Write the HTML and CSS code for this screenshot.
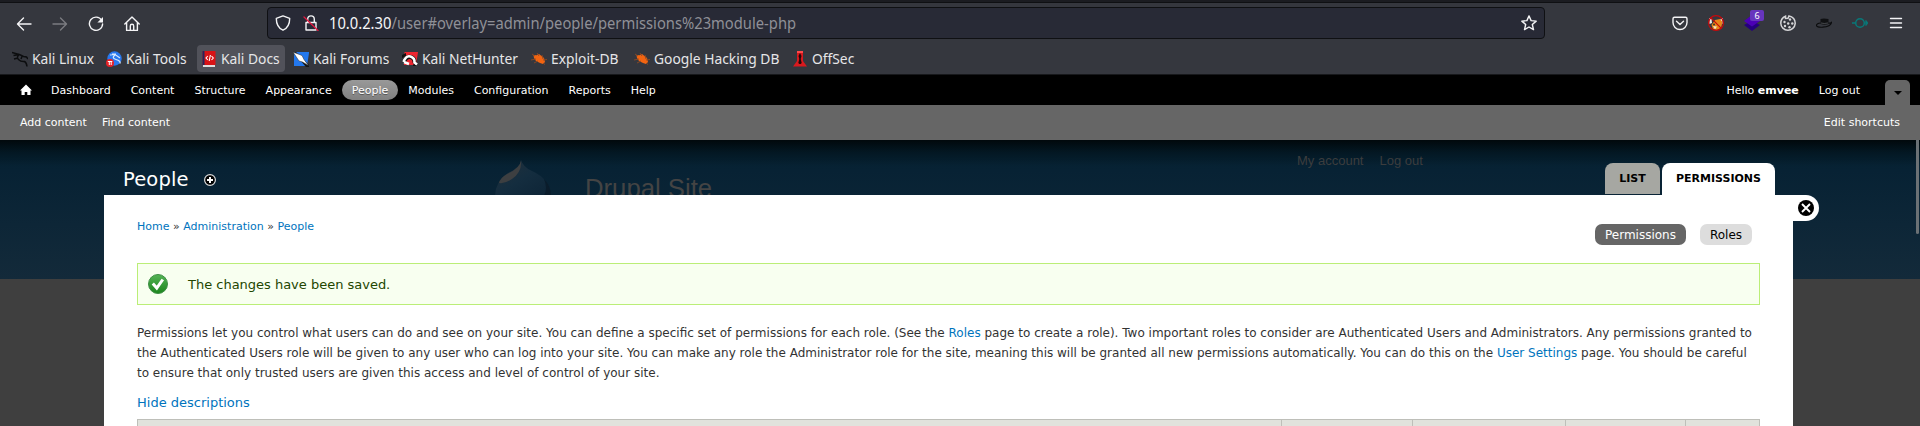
FILE: index.html
```html
<!DOCTYPE html>
<html lang="en">
<head>
<meta charset="utf-8">
<title>People | Drupal Site</title>
<link rel="stylesheet" href="styles.css">
</head>
<body>
<div class="window">
  <div class="titlebar"></div>
  <div class="navbar">
    <div class="nav-buttons">
      <svg class="ico" viewBox="0 0 16 16"><path d="M15 8H1.6M7.500 2L1.500 8l6 6"/></svg>
      <svg class="ico dim" viewBox="0 0 16 16"><path d="M1 8h13.400M8.500 2l6 6-6 6"/></svg>
      <svg class="ico" viewBox="0 0 16 16"><path d="M13.600 4.200A6.600 6.600 0 1 0 14.600 8"/><path class="solid" d="M15 1v5.600H9.400z"/></svg>
      <svg class="ico" viewBox="0 0 16 16"><path d="M.8 8L8 1l7.200 7M2.600 6.800v7.600h10.800V6.800M6.300 14V10a1.700 1.700 0 0 1 3.400 0v4"/></svg>
    </div>
    <div class="urlbar">
      <svg class="ico shield" viewBox="0 0 16 16"><path d="M8 .9l6.700 2.500c0 5-1.500 9.400-6.700 11.800C2.800 12.800 1.300 8.400 1.300 3.400z"/></svg>
      <svg class="ico lock" viewBox="0 0 16 16"><path d="M3 7.500h10v7.500H3zM4.700 7V4.200a3.300 3.300 0 0 1 6.600 0V7"/><path class="slash" d="M1 2l14 13.500"/></svg>
      <div class="url"><span class="host">10.0.2.30</span>/user#overlay=admin/people/permissions%23module-php</div>
      <svg class="ico star" viewBox="0 0 16 16"><path d="M8 .9l2.100 4.700 5.100.5-3.900 3.400 1.200 5.100L8 12l-4.500 2.600 1.200-5.100L.8 6.100l5.100-.5z"/></svg>
    </div>
    <div class="extensions">
      <span class="ext"><svg class="ico" viewBox="0 0 16 16"><path d="M2.500 2.200h11q1.500 0 1.500 1.500v3.800a7 7 0 0 1-14 0V3.700q0-1.500 1.500-1.500zM4.500 6.200L8 9.500l3.500-3.300"/></svg></span>
      <span class="ext"><svg viewBox="0 0 16 16"><path fill="#eee" d="M1 3l2.500 1L4 8l-2.500 1zM15 3l-2.500 1-.5 4 2.500 1z"/><path fill="#e8861a" d="M3.500 10L7 5l5-1 2.500 3-1.500 6-4 2-4-1z"/><path fill="#f4e3c8" d="M5 11l4 .5-2 3z"/><circle cx="6" cy="9.500" r="1" fill="#333"/><path fill="none" stroke="#c8080b" stroke-width="1.200" d="M2.700 2.700l10.600 10.600"/><circle cx="8" cy="8" r="7.400" fill="none" stroke="#c8080b" stroke-width="1.200"/></svg></span>
      <span class="ext"><svg viewBox="0 0 16 16"><path fill="#25007e" d="M0 10l8-4.500 8 4.500-8 6z"/><path fill="#4b00b5" d="M0 6l8-6 8 6-8 5.500z"/></svg><b class="badge">6</b></span>
      <span class="ext"><svg viewBox="0 0 16 16"><path fill="none" stroke="#d5d5d7" stroke-width="1.500" d="M5.500 1.200C2.500 2.500.8 5 .8 8.200A7.200 7.200 0 1 0 9 .9L8 3.200l-2.500.3z"/><g fill="#d5d5d7"><circle cx="4.500" cy="7" r="1.200"/><circle cx="10" cy="4.500" r="1.200"/><circle cx="5" cy="11" r="1.200"/><circle cx="8.200" cy="8.500" r="1.200"/><circle cx="9.500" cy="12.300" r="1.200"/><circle cx="12.300" cy="8.500" r="1.200"/></g></svg></span>
      <span class="ext"><svg viewBox="0 0 16 16"><path fill="#101113" d="M4.500 9V4q3-1 8 0v5q-4 1.500-8 0z"/><path fill="none" stroke="#0b0c0d" stroke-width="1.200" d="M4.500 8Q.5 8.500.5 10.500q0 2 6 1.700 8.500-.7 9-4.700-1 .8-3 .7"/><path fill="none" stroke="#53555b" stroke-width=".8" d="M5 8q3 1 7 0"/></svg></span>
      <span class="ext"><svg viewBox="0 0 16 16"><path fill="none" stroke="#087878" stroke-width="1.500" d="M0 8h4.500M11.500 8h3M8 3.700a4.300 4.300 0 1 1 0 8.600 4.300 4.300 0 0 1 0-8.600M13.500 5.500L15.500 8l-2 2.500"/></svg></span>
      <span class="ext"><svg class="ico menu-lines" viewBox="0 0 16 16"><path d="M2.500 3.500h11M2.500 8h11M2.500 12.500h11"/></svg></span>
    </div>
  </div>
  <div class="bookmarks">
    <div class="bm b1"><svg viewBox="0 0 16 16"><path fill="none" stroke="#0c0d0f" stroke-width="1.500" d="M0 1.500l7 2M1.500 4.500l6-1 4 2 3 .5 1.500 2M7.500 3.500Q4 6 6.500 8.500t6 2q2 1 2.500 5M2 8l4-1M10 5.500L9 8"/></svg><span>Kali Linux</span></div>
    <div class="bm b2"><svg viewBox="0 0 16 16"><circle cx="8.500" cy="7.500" r="7.200" fill="#2878ee"/><path fill="none" stroke="#d7e9ff" stroke-width="1.200" d="M4 4l5-.5 5 3.500M9 4Q5 7 10 8.500t4 4M6 3h4"/><circle cx="4" cy="12" r="4" fill="#e52127"/><path fill="none" stroke="#fff" d="M1.800 10.500h4.500M3.300 10.500V14M5.200 10.500V14"/></svg><span>Kali Tools</span></div>
    <div class="bm b3 hover"><svg viewBox="0 0 16 16"><path fill="#dedede" d="M2 14h12v2H2z"/><path fill="#d81316" d="M1.500 0h13v14h-13z"/><path fill="#23275c" d="M1.500 0h2v14h-2z"/><path fill="none" stroke="#fff" stroke-width="1.100" d="M6.800 5L5 7l1.800 2M10.500 5l1.800 2-1.800 2M9.400 4l-1.200 6"/></svg><span>Kali Docs</span></div>
    <div class="bm b4"><svg viewBox="0 0 16 16"><path fill="#2378ee" d="M1 1h15v1l-2 13H1z"/><path fill="#151719" d="M0 1h3l13 13v2h-3z"/><path fill="#fff" stroke="#27292e" stroke-width=".5" d="M0 1l9 3.500 2 4 4.500 6L9.500 11 6 10z"/></svg><span>Kali Forums</span></div>
    <div class="bm b5"><svg viewBox="0 0 16 16"><path fill="#ed2630" d="M2.500 1H16l-2 13H2z"/><path fill="#111" d="M0 4l4-2v3L0 7zM12 11l3 4h-4z"/><path fill="none" stroke="#111" stroke-width="4" d="M2 11.500Q4 5 8.500 6t4 6"/><path fill="none" stroke="#fff" stroke-width="2.600" d="M1.500 11Q4 4 8.500 5.500t4 6l2.500 2M2 11l5 2"/></svg><span>Kali NetHunter</span></div>
    <div class="bm b6"><svg viewBox="0 0 16 16"><path fill="#f26411" d="M2.500 4l3 .3L8 3l5 4 1 4-2 2-3-1-4-2-2-3z"/><path fill="none" stroke="#8c4a25" stroke-width=".9" d="M1 3l3 2M6 2l2 3M0 9l5-1M3 12l4-2M11 4l1 4M12 9l4-.5M12 12l2 1.500"/></svg><span>Exploit-DB</span></div>
    <div class="bm b7"><svg viewBox="0 0 16 16"><path fill="#f26411" d="M2.500 4l3 .3L8 3l5 4 1 4-2 2-3-1-4-2-2-3z"/><path fill="none" stroke="#8c4a25" stroke-width=".9" d="M1 3l3 2M6 2l2 3M0 9l5-1M3 12l4-2M11 4l1 4M12 9l4-.5M12 12l2 1.500"/></svg><span>Google Hacking DB</span></div>
    <div class="bm b8"><svg viewBox="0 0 16 16"><path fill="#d8191e" d="M5 0h6v10l4 5.500H1L5 10z"/><path fill="#ff4a4a" d="M5 0h6v2H5z"/><path fill="#210809" d="M8 2l1.500 3-.8 3 1 4-1 1H7.300l-1-1 1-4-.8-3z"/></svg><span>OffSec</span></div>
  </div>

  <nav class="toolbar">
    <svg class="home" viewBox="0 0 12 12"><path fill="#fff" d="M6 .5L12 6.500h-1.500V11H7.300V8H4.700v3H1.500V6.500H0z"/></svg>
    <div class="menu">
      <a>Dashboard</a><a>Content</a><a>Structure</a><a>Appearance</a><a class="active">People</a><a>Modules</a><a>Configuration</a><a>Reports</a><a>Help</a>
    </div>
    <div class="user"><a>Hello <strong>emvee</strong></a><a>Log out</a></div>
    <div class="toggle"><i></i></div>
  </nav>
  <div class="shortcuts">
    <div class="links"><a>Add content</a><a>Find content</a></div>
    <a>Edit shortcuts</a>
  </div>

  <main class="stage">
    <div class="site">
      <svg class="drop" viewBox="0 0 58 36">
        <defs><linearGradient id="d" x1="0" y1="0" x2="1" y2="1"><stop offset="0" stop-color="#23303a"/><stop offset=".5" stop-color="#142d3f"/><stop offset="1" stop-color="#0d2436"/></linearGradient></defs>
        <path fill="url(#d)" d="M27 0q2 7 11 11 18 8 19 25H1Q1 22 14 13q12-5 13-13z"/>
        <path fill="#0a1c2b" d="M50 19q7 7 7 17h-7q4-8 0-17z"/>
        <path fill="#3d3f41" d="M27 1q1 11-9 18-7 5-13 4 1-5 8-9 13-6 14-13z"/>
      </svg>
      <div class="site-name">Drupal Site</div>
      <div class="account"><a>My account</a><a>Log out</a></div>
    </div>
    <section class="overlay">
      <header class="title-row">
        <h1>People</h1>
        <svg class="plus" viewBox="0 0 12 12"><circle cx="6" cy="6" r="5.400" fill="#000" stroke="#ddd" stroke-width="1.200"/><path stroke="#fff" stroke-width="2" d="M3 6h6M6 3v6"/></svg>
        <div class="tabs"><a class="list">LIST</a><a class="current">PERMISSIONS</a></div>
      </header>
      <div class="panel">
        <div class="close"><svg viewBox="0 0 16 16"><circle cx="8" cy="8" r="8"/><path stroke="#fff" stroke-width="1.900" d="M4 4l8 8M12 4l-8 8"/></svg></div>
        <div class="subhead">
          <div class="crumbs"><a>Home</a> » <a>Administration</a> » <a>People</a></div>
          <div class="subtabs"><a class="on">Permissions</a><a>Roles</a></div>
        </div>
        <div class="status">
          <svg viewBox="0 0 20 20"><defs><linearGradient id="g" x1="0" y1="0" x2="0" y2="1"><stop offset="0" stop-color="#55b356"/><stop offset="1" stop-color="#1c861d"/></linearGradient></defs><circle cx="10" cy="10" r="9.500" fill="url(#g)" stroke="#3e8f45"/><path fill="none" stroke="#fff" stroke-width="3" d="M4.800 9.500l4 4.500 6-8.500"/></svg>
          <span>The changes have been saved.</span>
        </div>
        <div class="help">
          <div class="l1">Permissions let you control what users can do and see on your site. You can define a specific set of permissions for each role. (See the <a>Roles</a> page to create a role). Two important roles to consider are Authenticated Users and Administrators. Any permissions granted to</div>
          <div class="l2">the Authenticated Users role will be given to any user who can log into your site. You can make any role the Administrator role for the site, meaning this will be granted all new permissions automatically. You can do this on the <a>User Settings</a> page. You should be careful</div>
          <div class="l3">to ensure that only trusted users are given this access and level of control of your site.</div>
        </div>
        <div class="hide"><a>Hide descriptions</a></div>
        <div class="thead"><i></i><i></i><i></i><i></i><i></i></div>
      </div>
    </section>
    <div class="scrollbar"></div>
  </main>
</div>
</body>
</html>
```

FILE: styles.css
```css
* { box-sizing: border-box; }
body { margin: 0; background: #3f3f3f; font-family: "DejaVu Sans", sans-serif; }
svg { display: block; flex: none; }
.window { width: 1920px; height: 426px; overflow: hidden; display: flex; flex-direction: column; }
.window > * { flex: none; }

/* browser chrome */
.titlebar { height: 3px; background: #1b1c21; border-bottom: 1px solid #0f1013; }
.navbar { height: 42px; background: #35373e; display: flex; align-items: flex-start; padding-top: 4px; }
.ico { width: 16px; height: 16px; fill: none; stroke: #f4f4f6; stroke-width: 1.4; stroke-linejoin: round; stroke-linecap: round; }
.ico .solid { fill: #f4f4f6; stroke: none; }
.ico .slash { stroke: #e2173f; stroke-width: 1.3; }
.dim { stroke: #7b7c81; }
.nav-buttons { display: flex; gap: 20px; padding: 9px 0 0 16px; width: 267px; }
.urlbar { width: 1278px; height: 32px; background: #282a36; border: 1px solid #0f1013; border-radius: 4px; display: flex; align-items: center; padding-left: 7px; }
.lock { margin-left: 12px; }
.url { width: 1192px; margin-left: 10px; color: #8f9097; font: 16px/24px "Noto Sans", sans-serif; white-space: nowrap; transform: scaleX(.921); transform-origin: left; }
.url .host { color: #f6f6f8; }
.extensions { display: flex; margin-left: 117px; }
.ext { width: 36px; height: 32px; display: flex; align-items: center; justify-content: center; position: relative; }
.ext svg { width: 16px; height: 16px; }
.badge { position: absolute; left: 16px; top: 3px; width: 14px; height: 11px; border-radius: 2px; background: #6735bd; color: #fff; font: 9px/11px "Noto Sans", sans-serif; text-align: center; }
.ext .menu-lines { stroke-width: 1.4; }
.bookmarks { height: 30px; background: #35373e; border-bottom: 1px solid #17181b; display: flex; padding-left: 8px; }
.bm { height: 27px; display: flex; align-items: center; padding-left: 4px; gap: 4px; border-radius: 4px; color: #e6e6e8; font: 14.67px/27px "Noto Sans", sans-serif; white-space: nowrap; }
.bm svg { width: 16px; height: 16px; }
.bm span { width: 0; transform: scaleX(.942); transform-origin: left; }
.hover { background: #51525a; }
.b1 { width: 94px; }
.b2 { width: 95px; }
.b3 { width: 88px; margin-right: 4px; }
.b4 { width: 109px; }
.b5 { width: 129px; }
.b6 { width: 103px; }
.b7 { width: 158px; }
.b8 { width: 90px; }

/* admin toolbar */
.toolbar { height: 30px; background: #000; display: flex; align-items: center; font-size: 11px; color: #fff; padding-left: 20px; }
.home { width: 12px; height: 12px; }
.menu { display: flex; margin-left: 9px; flex: 1; }
.toolbar a { padding: 1px 10px 0; height: 20px; line-height: 20px; white-space: nowrap; }
.toolbar .active { background: linear-gradient(#999, #808080); border-radius: 10px; text-shadow: 0 1px 0 #555; }
.user { display: flex; }
.toggle { width: 25px; height: 25px; margin: 5px 10px 0 15px; background: #666; border-radius: 5px 5px 0 0; display: flex; justify-content: center; padding-top: 11px; }
.toggle i { width: 0; height: 0; border: 4px solid transparent; border-top-color: #000; border-bottom: 0; }
.shortcuts { height: 35px; background: #666; display: flex; justify-content: space-between; padding: 1px 20px 0; font-size: 11px; line-height: 34px; color: #fff; }
.links { display: flex; gap: 15px; }

/* dimmed site with the overlay on top */
.stage { height: 286px; position: relative; }
.site { position: absolute; inset: 0; height: 139px; padding: 20px 0 0 494px; display: flex; background: linear-gradient(rgba(0,0,0,.75), rgba(0,0,0,.3) 12px, rgba(0,0,0,0) 26px), linear-gradient(#03202f, #072234 30px, #132a3a); font-family: "Liberation Sans", Arial, sans-serif; color: #444; }
.drop { width: 58px; height: 36px; }
.site-name { width: 711px; padding-left: 33px; font-size: 25.7px; line-height: 30px; margin-top: 13px; }
.account { margin-left: 34px; margin-top: -7px; display: flex; gap: 16px; font-size: 13px; line-height: 16px; color: #3c3d3e; }
.overlay { position: relative; width: 1689px; margin-left: 104px; }
.title-row { height: 55px; display: flex; padding-left: 19px; color: #fff; }
.title-row h1 { margin: 28px 1px 0 0; width: 80px; font-size: 19.5px; font-weight: 400; line-height: 24px; letter-spacing: .15px; }
.plus { width: 12px; height: 12px; margin-top: 34px; }
.tabs { margin: 23px 18px 0 auto; display: flex; gap: 2px; font-size: 11px; font-weight: 700; color: #000; line-height: 30px; text-align: center; }
.tabs a { border-radius: 8px 8px 0 0; padding-top: 1px; }
.list { width: 55px; height: 31px; background: #a6a7a2; }
.current { width: 113px; height: 32px; background: #fff; }
.panel { height: 231px; background: #fff; padding: 0 33px; position: relative; color: #333; }
.panel a { color: #0074bd; }
.close { position: absolute; left: 1689px; top: 0; width: 26px; height: 26px; background: #fff; border-radius: 0 13px 13px 0; padding: 5px; }
.close svg { width: 16px; height: 16px; }
.subhead { height: 68px; display: flex; justify-content: space-between; font-size: 11px; }
.crumbs { padding-top: 22px; line-height: 20px; white-space: nowrap; }
.subtabs { display: flex; gap: 14px; padding: 29px 8px 0 0; font-size: 12px; line-height: 21px; text-align: center; }
.panel .subtabs a { width: 52px; height: 21px; border-radius: 7px; background: #ddd; color: #000; padding-top: 1px; }
.panel .subtabs .on { width: 91px; background: #666; color: #fff; }
.status { height: 42px; border: 1px solid #be7; background: #f8fff0; display: flex; align-items: center; gap: 20px; padding-left: 10px; font-size: 13px; color: #234600; }
.status svg { width: 20px; height: 20px; }
.status span { letter-spacing: -.01px; }
.help { padding-top: 18px; font-size: 12px; line-height: 20px; white-space: nowrap; }
.hide { font-size: 13px; line-height: 20px; padding-top: 10px; }
.thead { margin-top: 6px; height: 20px; background: #e1e2dc; border: 1px solid #bebfb9; display: flex; }
.thead i { border-right: 1px solid #bebfb9; width: 120px; }
.thead i:nth-child(1) { width: 1144px; }
.thead i:nth-child(2) { width: 131px; }
.thead i:nth-child(3) { width: 153px; }
.thead i:nth-child(5) { border: 0; width: 73px; }
.scrollbar { position: absolute; left: 1916px; top: 0; width: 3px; height: 94px; background: #6b7175; border-radius: 0 0 2px 2px; }
```
